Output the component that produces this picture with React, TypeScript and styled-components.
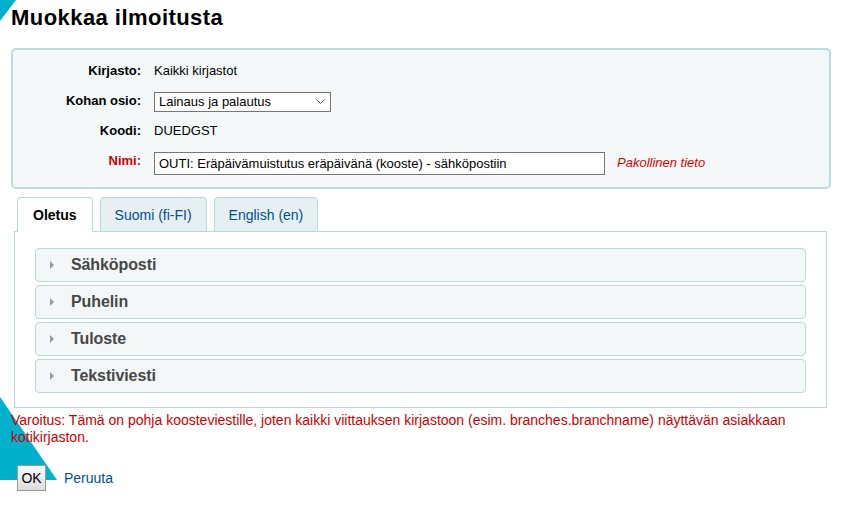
import React from "react";
import styled, { createGlobalStyle } from "styled-components";

const Global = createGlobalStyle`
  html, body { margin: 0; padding: 0; background: #fff; }
  body { font-family: "Liberation Sans", Arial, sans-serif; font-size: 13px; color: #000; }
  * { box-sizing: border-box; }
`;

const Page = styled.div`
  position: relative;
  width: 856px;
  min-height: 506px;
  padding: 0 0 0 11px;
  overflow: hidden;
`;

const Decor = styled.svg`
  position: absolute;
  left: 0;
  top: 0;
  z-index: 0;
  pointer-events: none;
`;

const Content = styled.div`
  position: relative;
  z-index: 1;
  width: 820px;
  display: flex;
  flex-direction: column;
`;

const Title = styled.h1`
  margin: 5px 0 0 0;
  font-size: 22px;
  line-height: 26px;
  font-weight: bold;
  letter-spacing: 0.45px;
`;

const Fieldset = styled.div`
  margin-top: 17px;
  width: 820px;
  height: 141px;
  background: #f4f8f9;
  border: 2px solid #bcdcdf;
  border-radius: 5px;
  padding: 11px 0 0 0;
  display: grid;
  grid-template-columns: 128px 1fr;
  grid-auto-rows: 30px;
  column-gap: 13px;
`;

const Label = styled.div<{ $required?: boolean }>`
  text-align: right;
  font-weight: bold;
  color: ${(p) => (p.$required ? "#cc0000" : "#000")};
  line-height: 18px;
  padding-top: 1px;
`;

const Value = styled.div`
  display: flex;
  align-items: flex-start;
  gap: 12px;
  line-height: 18px;
  padding-top: 1px;
`;

const SelectBox = styled.div`
  width: 177px;
  height: 20px;
  border: 1px solid #767676;
  background: #fff;
  display: flex;
  align-items: center;
  justify-content: space-between;
  padding: 0 5px 0 4px;
  line-height: 18px;
`;

const TextInput = styled.div`
  width: 451px;
  height: 23px;
  border: 1px solid #767676;
  background: #fff;
  padding: 0 4px;
  display: flex;
  align-items: center;
`;

const Required = styled.span`
  color: #dd0000;
  font-style: italic;
  line-height: 22px;
`;

const Tabs = styled.div`
  margin-top: 6px;
  display: flex;
  gap: 7px;
  padding-left: 6px;
  height: 36px;
  align-items: flex-end;
`;

const Tab = styled.div<{ $active?: boolean }>`
  height: 35px;
  padding: 0 ${(p) => (p.$active ? "15px" : "14px")};
  display: flex;
  align-items: center;
  border: 1px solid #b9d8d9;
  border-bottom: ${(p) => (p.$active ? "1px solid #fff" : "1px solid #b9d8d9")};
  border-radius: 4px 4px 0 0;
  background: ${(p) => (p.$active ? "#fff" : "#e6f0f2")};
  color: ${(p) => (p.$active ? "#000" : "#004d99")};
  font-weight: ${(p) => (p.$active ? "bold" : "normal")};
  font-size: 14px;
  position: relative;
  z-index: 2;
  margin-bottom: -1px;
`;

const Panel = styled.div`
  margin-left: 3px;
  width: 813px;
  border: 1px solid #b9d8d9;
  background: #fff;
  padding: 16px 20px 14px 20px;
  display: flex;
  flex-direction: column;
  gap: 3px;
`;

const AccItem = styled.div`
  height: 34px;
  border: 1px solid #b9d8d9;
  border-radius: 4px;
  background: #f4f7f8;
  display: flex;
  align-items: center;
  padding-left: 14px;
  gap: 17px;
  font-size: 16px;
  font-weight: bold;
  letter-spacing: -0.1px;
  color: #474747;
`;

const Caret = styled.span`
  width: 0;
  height: 0;
  border-top: 4px solid transparent;
  border-bottom: 4px solid transparent;
  border-left: 4px solid #999;
`;

const Warning = styled.p`
  margin: 4px 0 0 0;
  color: #cc0000;
  font-size: 14px;
  line-height: 17px;
  width: 820px;
`;

const Actions = styled.div`
  margin-top: 19px;
  padding-left: 6px;
  display: flex;
  align-items: center;
  gap: 18px;
`;

const OkButton = styled.button`
  font-family: "Liberation Sans", Arial, sans-serif;
  font-size: 14px;
  width: 29px;
  height: 26px;
  padding: 0;
  border: 1px solid #999;
  background: linear-gradient(#fafafa, #dcdcdc);
  color: #000;
`;

const Link = styled.a`
  color: #004d99;
  text-decoration: none;
  font-size: 14px;
`;

const rows = ["Sähköposti", "Puhelin", "Tuloste", "Tekstiviesti"];

export default function App() {
  return (
    <Page>
      <Global />
      <Decor width="856" height="506" viewBox="0 0 856 506">
        <polygon points="0,0 16,0 0,21" fill="#01b0cb" />
        <polygon points="0,397 0,480 57,480" fill="#01b0cb" />
      </Decor>
      <Content>
        <Title>Muokkaa ilmoitusta</Title>
        <Fieldset>
          <Label>Kirjasto:</Label>
          <Value>Kaikki kirjastot</Value>
          <Label>Kohan osio:</Label>
          <Value>
            <SelectBox>
              <span>Lainaus ja palautus</span>
              <svg width="9" height="6" viewBox="0 0 9 6">
                <path d="M0.5 0.5 L4.5 4.5 L8.5 0.5" fill="none" stroke="#555" strokeWidth="1" />
              </svg>
            </SelectBox>
          </Value>
          <Label>Koodi:</Label>
          <Value>DUEDGST</Value>
          <Label $required>Nimi:</Label>
          <Value>
            <TextInput>OUTI: Eräpäivämuistutus eräpäivänä (kooste) - sähköpostiin</TextInput>
            <Required>Pakollinen tieto</Required>
          </Value>
        </Fieldset>
        <Tabs>
          <Tab $active>Oletus</Tab>
          <Tab>Suomi (fi-FI)</Tab>
          <Tab>English (en)</Tab>
        </Tabs>
        <Panel>
          {rows.map((r) => (
            <AccItem key={r}>
              <Caret />
              {r}
            </AccItem>
          ))}
        </Panel>
        <Warning>
          Varoitus: Tämä on pohja koosteviestille, joten kaikki viittauksen kirjastoon (esim. branches.branchname) näyttävän asiakkaan kotikirjaston.
        </Warning>
        <Actions>
          <OkButton>OK</OkButton>
          <Link href="#">Peruuta</Link>
        </Actions>
      </Content>
    </Page>
  );
}
